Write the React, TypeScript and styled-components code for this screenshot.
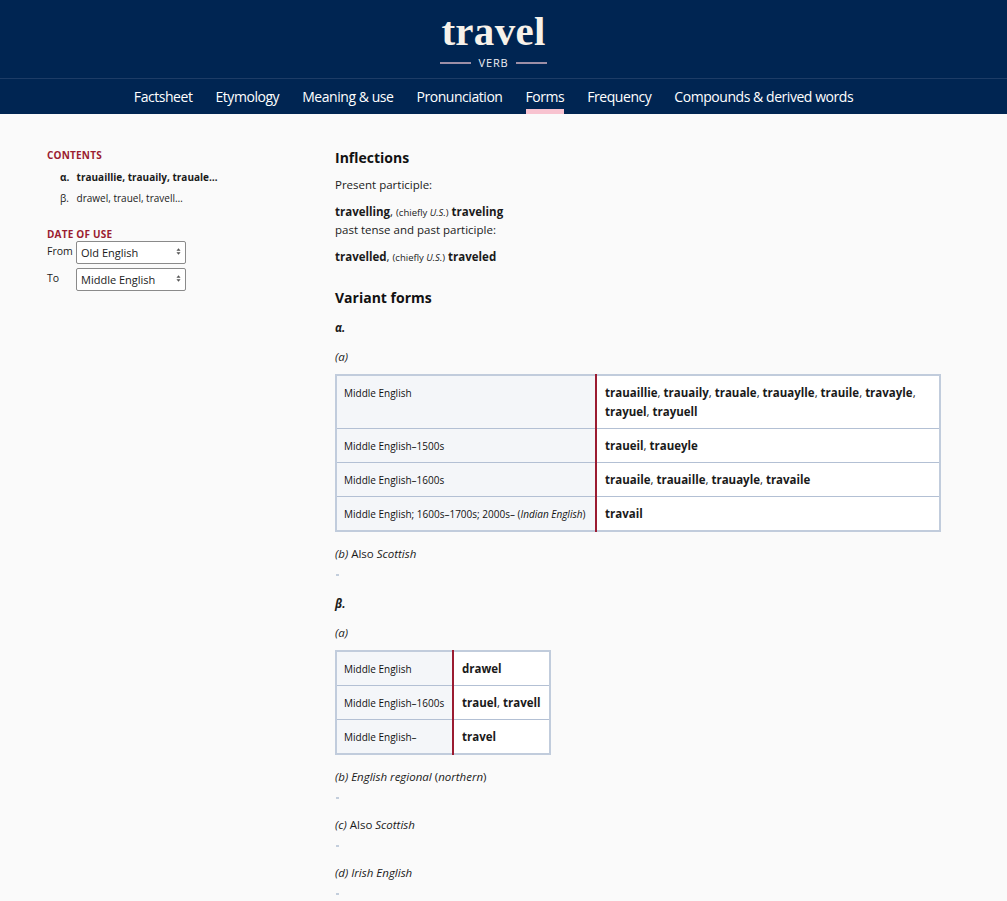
import styled, { createGlobalStyle } from "styled-components";

const GlobalStyle = createGlobalStyle`
  body {
    margin: 0;
    background: #fafafa;
    font-family: "Open Sans", "Noto Sans", sans-serif;
    color: #1a1a1a;
  }
`;

type FormRow = { date: React.ReactNode; forms: React.ReactNode };

const alphaRows: FormRow[] = [
  {
    date: "Middle English",
    forms: "trauaillie, trauaily, trauale, trauaylle, trauile, travayle, trayuel, trayuell",
  },
  { date: "Middle English–1500s", forms: "traueil, traueyle" },
  { date: "Middle English–1600s", forms: "trauaile, trauaille, trauayle, travaile" },
  {
    date: (
      <>
        Middle English; 1600s–1700s; 2000s– (<i>Indian English</i>)
      </>
    ),
    forms: "travail",
  },
];

const betaRows: FormRow[] = [
  { date: "Middle English", forms: "drawel" },
  { date: "Middle English–1600s", forms: "trauel, travell" },
  { date: "Middle English–", forms: "travel" },
];

const navItems = [
  "Factsheet",
  "Etymology",
  "Meaning & use",
  "Pronunciation",
  "Forms",
  "Frequency",
  "Compounds & derived words",
];

function FormsTable({ rows, dateWidth, full }: { rows: FormRow[]; dateWidth: number; full?: boolean }) {
  return (
    <Table $full={full}>
      <tbody>
        {rows.map((r, i) => (
          <tr key={i}>
            <DateCell style={{ width: dateWidth }}>{r.date}</DateCell>
            <FormCell>{renderForms(r.forms)}</FormCell>
          </tr>
        ))}
      </tbody>
    </Table>
  );
}

function renderForms(forms: React.ReactNode) {
  if (typeof forms !== "string") return forms;
  const parts = forms.split(", ");
  return parts.map((p, i) => (
    <span key={i}>
      <b>{p}</b>
      {i < parts.length - 1 ? ", " : ""}
    </span>
  ));
}

function PeriodSelect({ value }: { value: string }) {
  return (
    <SelectWrap>
      <Select defaultValue={value}>
        <option>Old English</option>
        <option>Middle English</option>
      </Select>
      <SelectArrows viewBox="0 0 6 10" aria-hidden>
        <path d="M3 1 L5.5 4 H0.5 Z" />
        <path d="M3 9 L5.5 6 H0.5 Z" />
      </SelectArrows>
    </SelectWrap>
  );
}

export default function App() {
  return (
    <>
      <GlobalStyle />
      <Header>
        <Title>travel</Title>
        <PartOfSpeech>
          <Rule />
          <span>VERB</span>
          <Rule />
        </PartOfSpeech>
      </Header>
      <Nav>
        {navItems.map((n) => (
          <NavItem key={n} $active={n === "Forms"}>
            {n}
          </NavItem>
        ))}
      </Nav>
      <Page>
        <Sidebar>
          <SideHeading>Contents</SideHeading>
          <ContentsList>
            <ContentsItem $current>
              <Marker>α.</Marker> trauaillie, trauaily, trauale…
            </ContentsItem>
            <ContentsItem>
              <Marker>β.</Marker> drawel, trauel, travell…
            </ContentsItem>
          </ContentsList>
          <SideHeading $spaced>Date of use</SideHeading>
          <FilterRow $first>
            <FilterLabel>From</FilterLabel>
            <PeriodSelect value="Old English" />
          </FilterRow>
          <FilterRow>
            <FilterLabel>To</FilterLabel>
            <PeriodSelect value="Middle English" />
          </FilterRow>
        </Sidebar>
        <Main>
          <SectionTitle>Inflections</SectionTitle>
          <Para>Present participle:</Para>
          <InflectionLine>
            <b>travelling</b>, <Small>(chiefly <i>U.S.</i>)</Small> <b>traveling</b>
          </InflectionLine>
          <Para $tight>past tense and past participle:</Para>
          <InflectionLine>
            <b>travelled</b>, <Small>(chiefly <i>U.S.</i>)</Small> <b>traveled</b>
          </InflectionLine>

          <SectionTitle $spaced>Variant forms</SectionTitle>
          <GroupLabel>α.</GroupLabel>
          <SubLabel>(a)</SubLabel>
          <FormsTable rows={alphaRows} dateWidth={244} full />
          <SubLabel $afterTable>
            (b) <Upright>Also</Upright> Scottish
          </SubLabel>
          <Dash />
          <GroupLabel $afterDash>β.</GroupLabel>
          <SubLabel>(a)</SubLabel>
          <FormsTable rows={betaRows} dateWidth={101} />
          <SubLabel $afterTable>
            (b) English regional <Upright>(</Upright>northern<Upright>)</Upright>
          </SubLabel>
          <Dash />
          <SubLabel $afterDash>
            (c) <Upright>Also</Upright> Scottish
          </SubLabel>
          <Dash />
          <SubLabel $afterDash>(d) Irish English</SubLabel>
          <Dash />
        </Main>
      </Page>
    </>
  );
}

const Header = styled.header`
  background: #002552;
  height: 78px;
  padding-right: 20px;
  display: flex;
  flex-direction: column;
  align-items: center;
  border-bottom: 1px solid #1d3c66;
`;

const Title = styled.h1`
  margin: 9px 0 0;
  font-family: "Liberation Serif", "Times New Roman", serif;
  font-weight: 700;
  font-size: 41px;
  line-height: 44px;
  color: #f7f2ea;
  letter-spacing: 0.3px;
`;

const PartOfSpeech = styled.div`
  display: flex;
  align-items: center;
  gap: 8px;
  margin-top: 3px;
  font-size: 11px;
  letter-spacing: 0.8px;
  color: #f0eef4;
  line-height: 14px;
`;

const Rule = styled.span`
  width: 31px;
  height: 2px;
  background: #9d8fa6;
`;

const Nav = styled.nav`
  background: #002552;
  height: 35px;
  padding-right: 20px;
  display: flex;
  justify-content: center;
  align-items: stretch;
  gap: 23px;
`;

const NavItem = styled.a<{ $active?: boolean }>`
  position: relative;
  display: flex;
  align-items: center;
  color: #ffffff;
  font-size: 14px;
  letter-spacing: -0.45px;
  padding-bottom: 1px;
  cursor: pointer;
  &::after {
    content: "";
    display: ${(p) => (p.$active ? "block" : "none")};
    position: absolute;
    left: 0;
    right: 0;
    bottom: 0;
    height: 5px;
    background: #f8c3d0;
  }
`;

const Page = styled.div`
  display: flex;
  padding: 34px 0 0 47px;
`;

const Sidebar = styled.aside`
  width: 288px;
  flex-shrink: 0;
`;

const SideHeading = styled.div<{ $spaced?: boolean }>`
  color: #9b1c31;
  font-size: 10px;
  font-weight: 700;
  text-transform: uppercase;
  letter-spacing: 0.2px;
  line-height: 14px;
  margin-top: ${(p) => (p.$spaced ? "22px" : "0")};
`;

const ContentsList = styled.ul`
  list-style: none;
  margin: 8px 0 0;
  padding: 0 0 0 13px;
`;

const ContentsItem = styled.li<{ $current?: boolean }>`
  font-size: 10px;
  line-height: 14px;
  font-weight: ${(p) => (p.$current ? 700 : 400)};
  color: #1a1a1a;
  margin-bottom: 7px;
`;

const Marker = styled.span`
  display: inline-block;
  width: 14px;
`;

const FilterRow = styled.div<{ $first?: boolean }>`
  display: flex;
  align-items: center;
  margin-top: ${(p) => (p.$first ? "-1px" : "4px")};
`;

const FilterLabel = styled.span`
  width: 29px;
  font-size: 10.5px;
  color: #1a1a1a;
  margin-top: -1px;
`;

const SelectWrap = styled.div`
  position: relative;
  width: 110px;
  height: 23px;
`;

const Select = styled.select`
  appearance: none;
  width: 100%;
  height: 100%;
  font-family: "Open Sans", sans-serif;
  font-size: 11px;
  color: #1a1a1a;
  border: 1px solid #8a8a8a;
  border-radius: 2px;
  background: #fff;
  padding: 0 4px;
`;

const SelectArrows = styled.svg`
  position: absolute;
  right: 5px;
  top: 7px;
  width: 5px;
  height: 9px;
  fill: #555;
  pointer-events: none;
`;

const Main = styled.main`
  width: 606px;
`;

const SectionTitle = styled.h2<{ $spaced?: boolean }>`
  font-size: 14px;
  font-weight: 700;
  margin: ${(p) => (p.$spaced ? "22px" : "0")} 0 0;
  line-height: 20px;
  color: #111;
`;

const Para = styled.p<{ $tight?: boolean }>`
  font-size: 11.5px;
  line-height: 17px;
  margin: ${(p) => (p.$tight ? "0" : "8px")} 0 0;
`;

const InflectionLine = styled.div`
  font-size: 11.5px;
  line-height: 17px;
  margin-top: 10px;
`;

const Small = styled.span`
  font-size: 9.5px;
`;

const GroupLabel = styled.div<{ $afterDash?: boolean }>`
  font-size: 11.5px;
  font-weight: 700;
  font-style: italic;
  margin-top: ${(p) => (p.$afterDash ? "19px" : "11px")};
  line-height: 18px;
`;

const SubLabel = styled.div<{ $afterTable?: boolean; $afterDash?: boolean }>`
  font-size: 11.5px;
  font-style: italic;
  line-height: 18px;
  margin-top: ${(p) => (p.$afterTable ? "13px" : p.$afterDash ? "17px" : "11px")};
`;

const Upright = styled.span`
  font-style: normal;
`;

const Dash = styled.div`
  width: 3px;
  height: 2px;
  background: #c3cedc;
  margin: 11px 0 0 1px;
`;

const Table = styled.table<{ $full?: boolean }>`
  border-collapse: collapse;
  width: ${(p) => (p.$full ? "100%" : "auto")};
  margin-top: 8px;
  border: 2px solid #c1ccdc;
  font-size: 11.5px;
`;

const DateCell = styled.td`
  background: #f4f6f9;
  border: 1px solid #b3c0d4;
  border-right: 2px solid #9b1c31;
  font-size: 10px;
  color: #111;
  vertical-align: top;
  padding: 10px 7px 8px;
  line-height: 14px;
  white-space: nowrap;
`;

const FormCell = styled.td`
  background: #fff;
  border: 1px solid #b3c0d4;
  border-left: 2px solid #9b1c31;
  vertical-align: top;
  padding: 7px 8px;
  line-height: 19px;
  b {
    font-weight: 700;
  }
`;
